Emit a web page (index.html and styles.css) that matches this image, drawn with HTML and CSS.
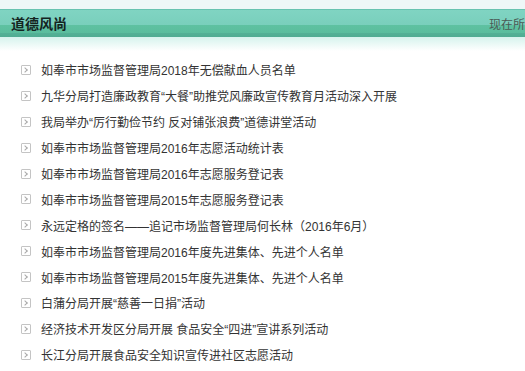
FILE: index.html
```html
<!DOCTYPE html>
<html lang="zh-CN">
<head>
  <meta charset="UTF-8">
  <title>道德风尚</title>
  <link rel="stylesheet" href="styles.css">
</head>
<body>
  <div class="bar-wrap">
    <div class="bar">
      <div class="bar-title">道德风尚</div>
      <div class="bar-loc">现在所</div>
    </div>
    <div class="bar-shadow"></div>
  </div>
  <ul class="news-list">
    <li><i class="arrow"></i><a href="#">如奉市市场监督管理局2018年无偿献血人员名单</a></li>
    <li><i class="arrow"></i><a href="#">九华分局打造廉政教育“大餐”助推党风廉政宣传教育月活动深入开展</a></li>
    <li><i class="arrow"></i><a href="#">我局举办“厉行勤俭节约 反对铺张浪费”道德讲堂活动</a></li>
    <li><i class="arrow"></i><a href="#">如奉市市场监督管理局2016年志愿活动统计表</a></li>
    <li><i class="arrow"></i><a href="#">如奉市市场监督管理局2016年志愿服务登记表</a></li>
    <li><i class="arrow"></i><a href="#">如奉市市场监督管理局2015年志愿服务登记表</a></li>
    <li><i class="arrow"></i><a href="#">永远定格的签名——追记市场监督管理局何长林（2016年6月）</a></li>
    <li><i class="arrow"></i><a href="#">如奉市市场监督管理局2016年度先进集体、先进个人名单</a></li>
    <li><i class="arrow"></i><a href="#">如奉市市场监督管理局2015年度先进集体、先进个人名单</a></li>
    <li><i class="arrow"></i><a href="#">白蒲分局开展“慈善一日捐”活动</a></li>
    <li><i class="arrow"></i><a href="#">经济技术开发区分局开展 食品安全“四进”宣讲系列活动</a></li>
    <li><i class="arrow"></i><a href="#">长江分局开展食品安全知识宣传进社区志愿活动</a></li>
  </ul>
</body>
</html>
```

FILE: styles.css
```css
body {
  margin: 0;
  background-color: #fff;
  font-family: "Liberation Sans", "Noto Sans CJK SC", sans-serif;
  font-size: 12px;
  color: #333;
  overflow: hidden;
}
.bar-wrap {
  padding-top: 9px;
  background-color: #eef7f7;
}
.bar {
  display: flex;
  align-items: center;
  height: 28px;
  background: linear-gradient(to bottom,
    #68c3b0 0, #68c3b0 1px,
    #80d4c2 1px, #79cfbc 16px,
    #5ec1a1 16px, #5abd9d 24px,
    #53b196 24px, #50ac92 28px);
}
.bar-title {
  flex: 0 0 489px;
  box-sizing: border-box;
  padding-left: 11px;
  font-size: 14px;
  font-weight: bold;
  color: #14241f;
}
.bar-loc {
  white-space: nowrap;
  color: #4a5a55;
}
.bar-shadow {
  height: 14px;
  background: linear-gradient(to bottom, #d6f3ed, #ffffff);
}
.news-list {
  list-style: none;
  margin: 0;
  padding: 6px 0 0 21px;
}
.news-list li {
  display: flex;
  align-items: center;
  height: 25.9px;
  white-space: nowrap;
}
.news-list a {
  color: #333;
  text-decoration: none;
}
.arrow {
  position: relative;
  width: 8px;
  height: 8px;
  margin-right: 10px;
  border: 1px solid #c4c4c4;
  border-radius: 1px;
}
.arrow::after {
  content: "";
  position: absolute;
  left: 1px;
  top: 2px;
  width: 3px;
  height: 3px;
  border-top: 1px solid #a8a8a8;
  border-right: 1px solid #a8a8a8;
  transform: rotate(45deg);
}
```
